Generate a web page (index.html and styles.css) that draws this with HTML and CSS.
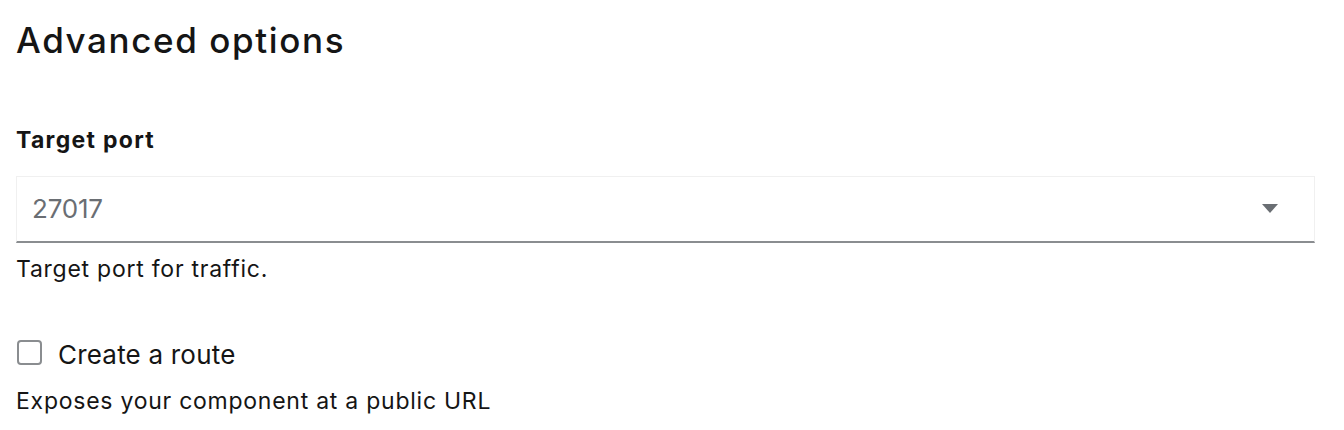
FILE: index.html
```html
<!DOCTYPE html>
<html lang="en">
<head>
<meta charset="utf-8">
<title>Advanced options</title>
<link rel="stylesheet" href="styles.css">
</head>
<body>
<div class="page">
  <h1 class="title">Advanced options</h1>
  <div class="field">
    <label class="label" for="port">Target port</label>
    <div class="select" id="port">
      <span class="select-value">27017</span>
      <svg class="caret" width="16" height="9" viewBox="0 0 16 9"><path d="M0 0 H16 L8 9 Z" fill="#6a6e73"/></svg>
    </div>
    <div class="help">Target port for traffic.</div>
  </div>
  <div class="check-field">
    <div class="check-row">
      <span class="checkbox"></span>
      <span class="check-label">Create a route</span>
    </div>
    <div class="help check-help">Exposes your component at a public URL</div>
  </div>
</div>
</body>
</html>
```
FILE: styles.css
```css
html, body {
  margin: 0;
  padding: 0;
  background: #ffffff;
}
body {
  font-family: Inter, "Noto Sans", sans-serif;
  color: #151515;
}
.page {
  padding: 19px 29px 0 16px;
}
.title {
  margin: 0;
  font-size: 35px;
  line-height: 42px;
  font-weight: 500;
  letter-spacing: 1.6px;
}
.field {
  margin-top: 63px;
}
.label {
  display: block;
  font-size: 23px;
  line-height: 32px;
  font-weight: 700;
  letter-spacing: 1.3px;
}
.select {
  margin-top: 20px;
  height: 67px;
  box-sizing: border-box;
  border: 1px solid #f0f0f0;
  border-bottom: 2px solid #8a8d90;
  display: flex;
  align-items: center;
  padding: 0 36px 2px 15px;
}
.select-value {
  flex: 1;
  font-size: 26px;
  letter-spacing: -0.2px;
  color: #6a6e73;
}
.caret {
  display: block;
}
.help {
  margin-top: 10px;
  font-size: 23px;
  line-height: 32px;
  letter-spacing: 0.75px;
}
.check-field {
  margin-top: 52px;
}
.check-row {
  display: flex;
  align-items: flex-start;
  height: 36px;
}
.checkbox {
  margin: 3px 0 0 1px;
  width: 25px;
  height: 25px;
  box-sizing: border-box;
  border: 2px solid #8a8d90;
  border-radius: 4px;
}
.check-label {
  margin-left: 16px;
  font-size: 26px;
  line-height: 36px;
  letter-spacing: 0.2px;
}
.check-help {
  margin-top: 12px;
}
```
